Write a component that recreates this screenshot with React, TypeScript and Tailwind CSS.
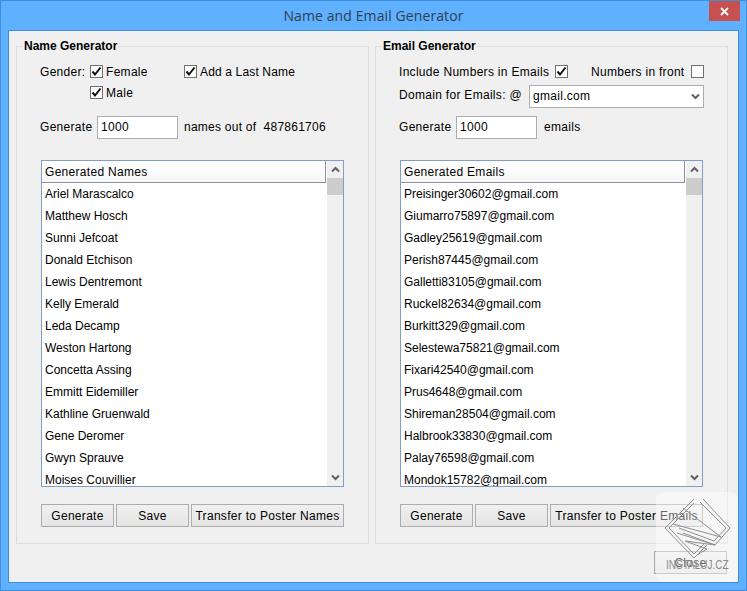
import React from "react";

const names = ["Ariel Marascalco","Matthew Hosch","Sunni Jefcoat","Donald Etchison","Lewis Dentremont","Kelly Emerald","Leda Decamp","Weston Hartong","Concetta Assing","Emmitt Eidemiller","Kathline Gruenwald","Gene Deromer","Gwyn Sprauve","Moises Couvillier"];
const emails = ["Preisinger30602@gmail.com","Giumarro75897@gmail.com","Gadley25619@gmail.com","Perish87445@gmail.com","Galletti83105@gmail.com","Ruckel82634@gmail.com","Burkitt329@gmail.com","Selestewa75821@gmail.com","Fixari42540@gmail.com","Prus4648@gmail.com","Shireman28504@gmail.com","Halbrook33830@gmail.com","Palay76598@gmail.com","Mondok15782@gmail.com"];

function Check({ checked = true }: { checked?: boolean }) {
  return (
    <span className="w-[13px] h-[13px] border border-[#707070] bg-white flex items-center justify-center shrink-0">
      {checked && (
        <svg width="11" height="11" viewBox="0 0 11 11">
          <path d="M1.5 5.5 L4 8.5 L9.5 1.5" fill="none" stroke="#111" strokeWidth="2" />
        </svg>
      )}
    </span>
  );
}

function Btn({ w, children }: { w: string; children: React.ReactNode }) {
  return (
    <div className={`${w} h-[23px] border border-[#acacac] bg-gradient-to-b from-[#f0f0f0] to-[#e5e5e5] flex items-center justify-center`}>
      {children}
    </div>
  );
}

function Input({ children }: { children: React.ReactNode }) {
  return (
    <div className="w-[81px] h-[23px] border border-[#abadb3] bg-white pl-[3px] pb-px flex items-center">{children}</div>
  );
}

function List({ title, items }: { title: string; items: string[] }) {
  return (
    <div className="w-[303px] h-[327px] border border-[#7f9fc6] bg-white flex overflow-hidden">
      <div className="flex-1 min-w-0">
        <div className="h-[22px] mr-px pl-[3px] bg-gradient-to-b from-white to-[#f7f7f7] border-b border-r border-[#8a94a0] flex items-center">{title}</div>
        {items.map((t) => (
          <div key={t} className="h-[22px] pl-[3px] flex items-center whitespace-nowrap tracking-normal">{t}</div>
        ))}
      </div>
      <div className="w-[16px] shrink-0 bg-[#f0f0f0] flex flex-col">
        <div className="h-[17px] flex items-center justify-center">
          <svg width="9" height="7" viewBox="0 0 9 7"><path d="M1 5.5 L4.5 2 L8 5.5" fill="none" stroke="#606060" strokeWidth="2" /></svg>
        </div>
        <div className="h-[17px] bg-[#cdcdcd]" />
        <div className="flex-1" />
        <div className="h-[17px] flex items-center justify-center">
          <svg width="9" height="7" viewBox="0 0 9 7"><path d="M1 1.5 L4.5 5 L8 1.5" fill="none" stroke="#606060" strokeWidth="2" /></svg>
        </div>
      </div>
    </div>
  );
}

function Panel({ title, children }: { title: string; children: React.ReactNode }) {
  return (
    <div className="relative w-[353px] h-[498px] border border-[#dcdcdc] pl-[24px] pt-[14px]">
      <span className="absolute left-[6px] -top-[8px] h-[15px] leading-[15px] bg-[#f0f0f0] px-[1px] font-bold text-[12px] tracking-normal">{title}</span>
      {children}
    </div>
  );
}

export default function App() {
  return (
    <div
      className="w-[747px] h-[591px] bg-[#5fb0ff] border border-[#3f8fd8] flex flex-col overflow-hidden relative text-[12px] text-black tracking-[0.3px]"
      style={{ fontFamily: '"Liberation Sans", Arial, sans-serif' }}
    >
      <div className="h-[29px] shrink-0 flex items-center justify-center text-[14px] tracking-[0.1px] text-[#2f3f50] relative" style={{ fontFamily: '"Open Sans", sans-serif' }}>
        Name and Email Generator
        <div className="absolute right-[6px] top-0 w-[31px] h-[20px] bg-[#c75050] flex items-center justify-center">
          <svg width="9" height="9" viewBox="0 0 9 9"><path d="M1 1 L8 8 M8 1 L1 8" stroke="#fff" strokeWidth="1.8" /></svg>
        </div>
      </div>
      <div className="ml-[7px] mr-[7px] h-[553px] bg-[#f0f0f0] border border-[#3f8fd8] pt-[15px] pl-[7px] relative">
        <div className="flex gap-[6px]">
          <Panel title="Name Generator">
            <div className="h-[21px] flex items-center">
              <span className="w-[50px] -ml-px">Gender:</span>
              <Check /><span className="ml-[3px] w-[78px]">Female</span>
              <Check /><span className="ml-[3px] tracking-[0.15px]">Add a Last Name</span>
            </div>
            <div className="h-[21px] flex items-center pl-[49px]">
              <Check /><span className="ml-[3px]">Male</span>
            </div>
            <div className="mt-[13px] h-[23px] flex items-center">
              <span className="w-[57px] -ml-px pb-px">Generate</span>
              <Input>1000</Input>
              <span className="ml-[6px] pb-px tracking-[0.25px]">names out of&nbsp; 487861706</span>
            </div>
            <div className="mt-[21px]"><List title="Generated Names" items={names} /></div>
            <div className="mt-[17px] flex gap-[2px]">
              <Btn w="w-[73px]">Generate</Btn>
              <Btn w="w-[73px]">Save</Btn>
              <Btn w="w-[153px]">Transfer to Poster Names</Btn>
            </div>
          </Panel>
          <Panel title="Email Generator">
            <div className="h-[21px] flex items-center">
              <span className="w-[156px] -ml-px">Include Numbers in Emails</span>
              <Check />
              <span className="ml-[23px] w-[100px]">Numbers in front</span>
              <Check checked={false} />
            </div>
            <div className="h-[26px] flex items-end">
              <span className="w-[130px] -ml-px self-center">Domain for Emails: @</span>
              <div className="w-[175px] h-[23px] border border-[#abadb3] bg-white pl-[3px] pb-px flex items-center justify-between pr-[3px]">
                gmail.com
                <svg width="9" height="7" viewBox="0 0 9 7"><path d="M1 1.5 L4.5 5 L8 1.5" fill="none" stroke="#606060" strokeWidth="2" /></svg>
              </div>
            </div>
            <div className="mt-[8px] h-[23px] flex items-center">
              <span className="w-[57px] -ml-px pb-px">Generate</span>
              <Input>1000</Input>
              <span className="ml-[7px] pb-px">emails</span>
            </div>
            <div className="mt-[21px]"><List title="Generated Emails" items={emails} /></div>
            <div className="mt-[17px] flex gap-[2px]">
              <Btn w="w-[73px]">Generate</Btn>
              <Btn w="w-[73px]">Save</Btn>
              <Btn w="w-[153px]">Transfer to Poster Emails</Btn>
            </div>
          </Panel>
        </div>
        <div className="flex justify-end mt-[7px] pr-[11px]">
          <Btn w="w-[73px]">Close</Btn>
        </div>
      </div>
      <div className="absolute left-[655px] top-[491px] w-[82px] h-[90px] rounded-[8px] bg-white/40 flex flex-col items-center">
        <svg width="68" height="64" viewBox="0 0 68 64" className="mt-[5px]" fill="none" stroke="#8f8f8f" strokeWidth="1">
          <path d="M31 2 L2 31 L31 61 L44 48" />
          <path d="M31 6 L6 31 L31 57 L41 47" />
          <path d="M40 2 L67 31 L52 48 L20 36" />
          <path d="M37 5 L63 31 L51 44 L16 31" />
          <path d="M20 11 L58 40" />
          <path d="M10 27 L58 40 M14 36 L52 48 L22 44 L44 52 L34 58" />
        </svg>
      </div>
      <span className="absolute left-[665px] top-[557px] text-[10px] leading-[14px] tracking-normal text-[#8a8a8a] scale-y-125">INSTALUJ.CZ</span>
    </div>
  );
}
